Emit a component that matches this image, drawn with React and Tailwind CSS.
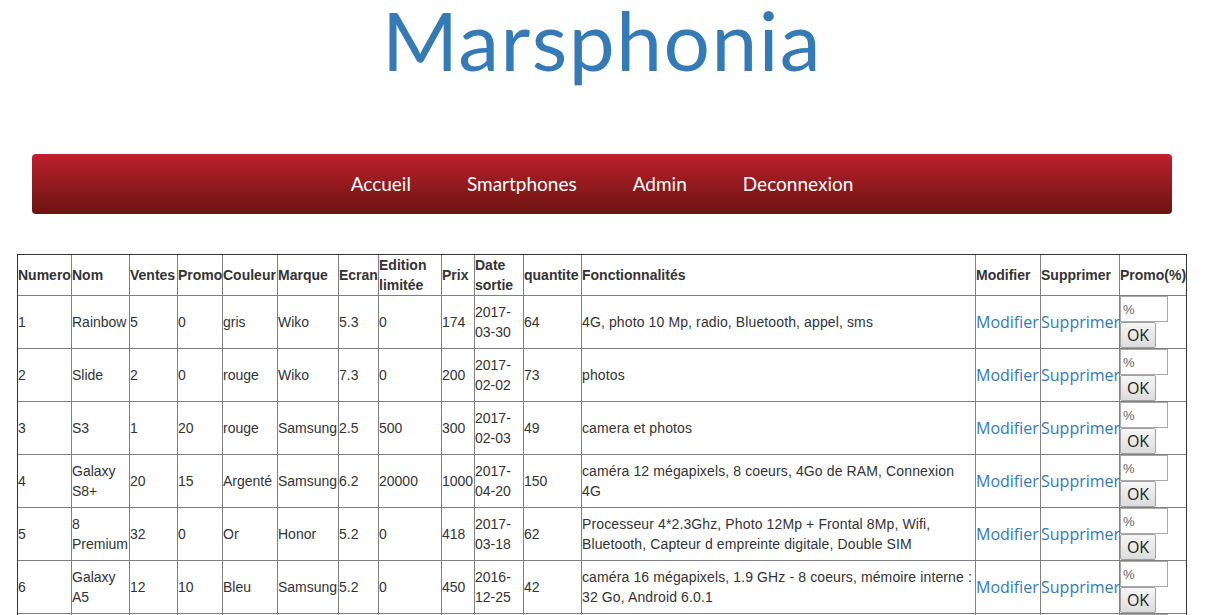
import React from "react";

const rows = [
  ["1", "Rainbow", "5", "0", "gris", "Wiko", "5.3", "0", "174", "2017-03-30", "64", "4G, photo 10 Mp, radio, Bluetooth, appel, sms"],
  ["2", "Slide", "2", "0", "rouge", "Wiko", "7.3", "0", "200", "2017-02-02", "73", "photos"],
  ["3", "S3", "1", "20", "rouge", "Samsung", "2.5", "500", "300", "2017-02-03", "49", "camera et photos"],
  ["4", "Galaxy S8+", "20", "15", "Argenté", "Samsung", "6.2", "20000", "1000", "2017-04-20", "150", "caméra 12 mégapixels, 8 coeurs, 4Go de RAM, Connexion 4G"],
  ["5", "8 Premium", "32", "0", "Or", "Honor", "5.2", "0", "418", "2017-03-18", "62", "Processeur 4*2.3Ghz, Photo 12Mp + Frontal 8Mp, Wifi, Bluetooth, Capteur d empreinte digitale, Double SIM"],
  ["6", "Galaxy A5", "12", "10", "Bleu", "Samsung", "5.2", "0", "450", "2016-12-25", "42", "caméra 16 mégapixels, 1.9 GHz - 8 coeurs, mémoire interne : 32 Go, Android 6.0.1"],
  ["7", "P10", "8", "0", "noir", "Huawei", "5.1", "0", "520", "2017-03-01", "30", "photo 20 Mp, Leica, 4Go de RAM"],
];

const headers = [
  ["Numero", "w-[53px]"],
  ["Nom", "w-[58px]"],
  ["Ventes", "w-[48px]"],
  ["Promo", "w-[45px]"],
  ["Couleur", "w-[55px]"],
  ["Marque", "w-[61px]"],
  ["Ecran", "w-[40px]"],
  ["Edition limitée", "w-[63px]"],
  ["Prix", "w-[33px]"],
  ["Date sortie", "w-[49px]"],
  ["quantite", "w-[58px]"],
  ["Fonctionnalités", "w-[394px]"],
  ["Modifier", "w-[65px]"],
  ["Supprimer", "w-[79px]"],
  ["Promo(%)", "w-[67px]"],
];

const cell = "p-0 align-middle text-left border-l border-t border-[#808080] first:border-l-0";

export default function App() {
  return (
    <div className="w-[1204px] bg-white text-[#333] font-['Liberation_Sans',Arial,sans-serif]">
      {/* TITLE */}
      <h1 className="h-[120px] text-center text-[#337ab7] text-[82px] leading-[78px] font-['Lato',sans-serif] tracking-[1.5px]">
        Marsphonia
      </h1>

      {/* NAV */}
      <nav className="mx-[32px] mt-[34px] h-[60px] rounded-[4px] bg-gradient-to-b from-[#c01f2c] to-[#6a140f] flex items-center justify-center gap-[56px] font-['Lato',sans-serif] text-white text-[19px]">
        <a href="#">Accueil</a>
        <a href="#">Smartphones</a>
        <a href="#">Admin</a>
        <a href="#">Deconnexion</a>
      </nav>

      {/* TABLE */}
      <table className="mx-[17px] mt-[40px] w-[1170px] table-fixed border-separate border-spacing-0 border border-[#333] text-[14px] leading-[20px]">
        <thead>
          <tr className="h-[40px]">
            {headers.map(([h, w]) => (
              <th key={h} className={`${cell} ${w} border-t-0 font-bold`}>
                {h}
              </th>
            ))}
          </tr>
        </thead>
        <tbody>
          {rows.map((r) => (
            <tr key={r[0]} className="h-[53px]">
              {r.map((v, i) => (
                <td key={i} className={`${cell} ${i === 11 ? "tracking-[0.12px]" : ""}`}>
                  {v}
                </td>
              ))}
              <td className={cell}>
                <a href="#" className="text-[#337ab7] text-[16px] font-['Open_Sans',sans-serif]">
                  Modifier
                </a>
              </td>
              <td className={cell}>
                <a href="#" className="text-[#337ab7] text-[16px] font-['Open_Sans',sans-serif]">
                  Supprimer
                </a>
              </td>
              <td className={cell}>
                <div className="flex flex-col items-start">
                  <input
                    type="text"
                    placeholder="%"
                    className="w-[48px] h-[26px] px-[2px] border border-[#a9a9a9] text-[13px] placeholder:text-[#666] outline-none"
                  />
                  <button className="w-[36px] h-[26px] border border-[#a0a0a0] rounded-[2px] bg-gradient-to-b from-[#f6f6f6] to-[#dcdcdc] text-[16px] leading-[20px] text-[#222] font-['Open_Sans',sans-serif]">
                    OK
                  </button>
                </div>
              </td>
            </tr>
          ))}
        </tbody>
      </table>
    </div>
  );
}
